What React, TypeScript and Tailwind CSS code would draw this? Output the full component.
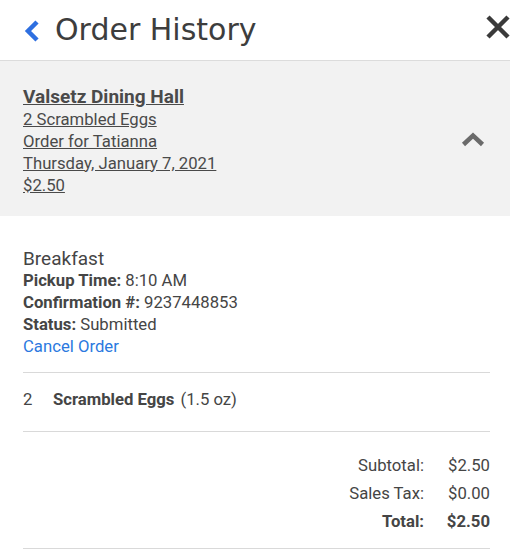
const App = () => {
  const details = [
    { label: "Pickup Time:", value: "8:10 AM" },
    { label: "Confirmation #:", value: "9237448853" },
    { label: "Status:", value: "Submitted" },
  ];

  const totals = [
    { label: "Subtotal:", value: "$2.50", bold: false },
    { label: "Sales Tax:", value: "$0.00", bold: false },
    { label: "Total:", value: "$2.50", bold: true },
  ];

  return (
    <div className="w-[510px] h-[549px] overflow-hidden bg-white text-[#454545] font-['Roboto',sans-serif]">
      {/* Header */}
      <div className="h-[61px] flex items-center justify-between border-b border-[#dcdcdc] pl-[24px]">
        <div className="flex items-center gap-[15px]">
          <svg width="16" height="22" viewBox="0 0 16 22" className="mt-[2px]">
            <path d="M13 2 L4 11 L13 20" fill="none" stroke="#2e6fe0" strokeWidth="4.5" strokeLinejoin="miter" />
          </svg>
          <h1 className="text-[30px] font-medium text-[#3d3d3d] font-['DejaVu_Sans',sans-serif] leading-none">
            Order History
          </h1>
        </div>
        <svg width="26" height="26" viewBox="0 0 26 26" className="mr-[-1px] mt-[-6px]">
          <path d="M3 3 L23 23 M23 3 L3 23" stroke="#3a3a3a" strokeWidth="4.5" />
        </svg>
      </div>

      {/* Order summary */}
      <div className="bg-[#f2f2f2] h-[155px] flex items-center justify-between pl-[23px] pr-[25px]">
        <div className="flex flex-col text-[16.7px] leading-[22px] text-[#4a4a4a] underline mt-[4px]">
          <span className="text-[19px] font-bold leading-[24px] mb-[-1px] pb-[1px]">Valsetz Dining Hall</span>
          <span>2 Scrambled Eggs</span>
          <span>Order for Tatianna</span>
          <span>Thursday, January 7, 2021</span>
          <span>$2.50</span>
        </div>
        <svg width="24" height="15" viewBox="0 0 24 15" className="mt-[2px]">
          <path d="M2.5 12.5 L12 3.5 L21.5 12.5" fill="none" stroke="#6b6b6b" strokeWidth="4.5" />
        </svg>
      </div>

      {/* Details */}
      <div className="pl-[23px] pr-[20px]">
        <div className="pt-[31px] pb-[14px] border-b border-[#d9d9d9] flex flex-col text-[16.7px] leading-[22px]">
          <span className="text-[19px] leading-[24px] mb-[-1px]">Breakfast</span>
          {details.map((d) => (
            <span key={d.label}>
              <span className="font-bold">{d.label}</span> {d.value}
            </span>
          ))}
          <a className="text-[#2b79e0]">Cancel Order</a>
        </div>

        <div className="h-[59px] pt-[15px] flex items-start leading-[24px] border-b border-[#d9d9d9] text-[16.7px]">
          <span className="w-[30px]">2</span>
          <span className="font-bold">Scrambled Eggs</span>
          <span className="ml-[6px]">(1.5 oz)</span>
        </div>

        <div className="pt-[20px] pb-[12px] border-b border-[#d9d9d9] flex flex-col items-end text-[16.7px] leading-[28px]">
          {totals.map((t) => (
            <div key={t.label} className={`flex ${t.bold ? "font-bold" : ""}`}>
              <span className="text-right">{t.label}</span>
              <span className="w-[66px] text-right">{t.value}</span>
            </div>
          ))}
        </div>
      </div>
    </div>
  );
};

export default App;
